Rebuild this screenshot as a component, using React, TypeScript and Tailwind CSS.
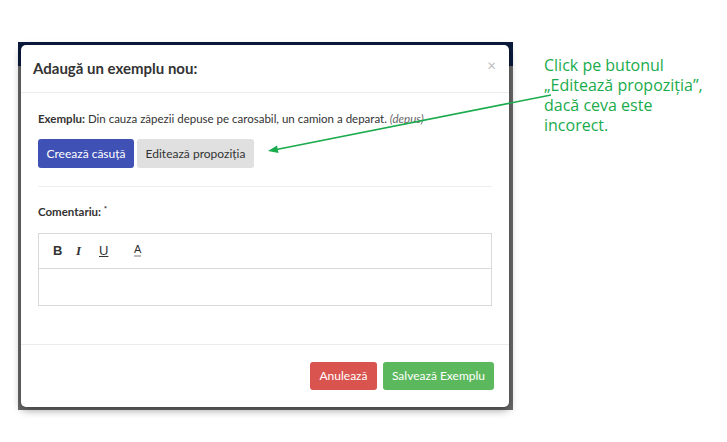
import React from "react";

export default function App() {
  const font = { fontFamily: "Lato, 'Noto Sans', sans-serif" };
  return (
    <div className="relative w-[727px] h-[442px] bg-white overflow-hidden" style={font}>
      <div className="pt-[42px] pl-[18px]">
        <div className="relative w-[495px] h-[368px] bg-[#6b6b6b] flex flex-col">
          <div className="h-[24px] bg-[#0b1a3d] shrink-0"></div>
          <div className="absolute left-[3px] top-[3px] w-[488px] h-[362px] bg-white rounded-[5px] shadow-[0_3px_8px_rgba(0,0,0,0.4)] flex flex-col">
            <div className="h-[48px] flex items-center justify-between px-[12px] border-b border-[#ececec]">
              <div className="text-[15px] font-bold text-[#333]">Adaugă un exemplu nou:</div>
              <div className="text-[#bbb] text-[15px] pr-[1px] -mt-[6px]">×</div>
            </div>
            <div className="flex-1 px-[17px] flex flex-col">
              <div className="mt-[17px] text-[11.5px] text-[#333]">
                <span className="font-bold">Exemplu:</span> Din cauza zăpezii depuse pe carosabil, un camion a deparat.{" "}
                <span className="italic text-[#666]">(depus)</span>
              </div>
              <div className="mt-[12px] flex gap-[3px]">
                <div className="h-[29px] w-[96px] flex items-center justify-center bg-[#3f51b5] text-white text-[12px] rounded-[3px]">Creează căsuță</div>
                <div className="h-[29px] w-[117px] flex items-center justify-center bg-[#e0e0e0] text-[#333] text-[12px] rounded-[3px]">Editează propoziția</div>
              </div>
              <div className="mt-[18px] border-t border-[#eeeeee]"></div>
              <div className="mt-[16px] text-[11.5px] font-bold text-[#333]">Comentariu: <sup className="text-[8px]">*</sup></div>
              <div className="mt-[12px] h-[73px] border border-[#d9d9d9] flex flex-col">
                <div className="h-[35px] border-b border-[#d9d9d9] flex items-center pl-[14px] text-[13px] text-[#333]" style={{ fontFamily: "'Liberation Sans', sans-serif" }}>
                  <span className="w-[23px] font-bold">B</span>
                  <span className="w-[23px] italic font-bold" style={{ fontFamily: "'Liberation Serif', serif" }}>I</span>
                  <span className="w-[35px] underline">U</span>
                  <span className="text-[11px] border-b-[2px] border-[#bbb] leading-[11px]">A</span>
                </div>
                <div className="flex-1"></div>
              </div>
            </div>
            <div className="h-[63px] border-t border-[#ececec] flex items-center justify-end gap-[6px] px-[15px] shrink-0">
              <div className="h-[28px] w-[67px] flex items-center justify-center bg-[#d9534f] text-white text-[12px] rounded-[3px]">Anulează</div>
              <div className="h-[28px] w-[111px] flex items-center justify-center bg-[#5cb85c] text-white text-[12px] rounded-[3px]">Salvează Exemplu</div>
            </div>
          </div>
        </div>
      </div>
      <div className="absolute left-[544px] top-[55px] text-[16px] leading-[20px] text-[#1aab4d]" style={{ fontFamily: "'Open Sans', sans-serif" }}>
        Click pe butonul<br />„Editează propoziția”,<br />dacă ceva este<br />incorect.
      </div>
      <svg className="absolute left-0 top-0" width="727" height="442">
        <line x1="551" y1="95" x2="274" y2="150" stroke="#1aab4d" strokeWidth="1.6" />
        <polygon points="268,151 277,145.5 278.5,153" fill="#1aab4d" />
      </svg>
    </div>
  );
}
